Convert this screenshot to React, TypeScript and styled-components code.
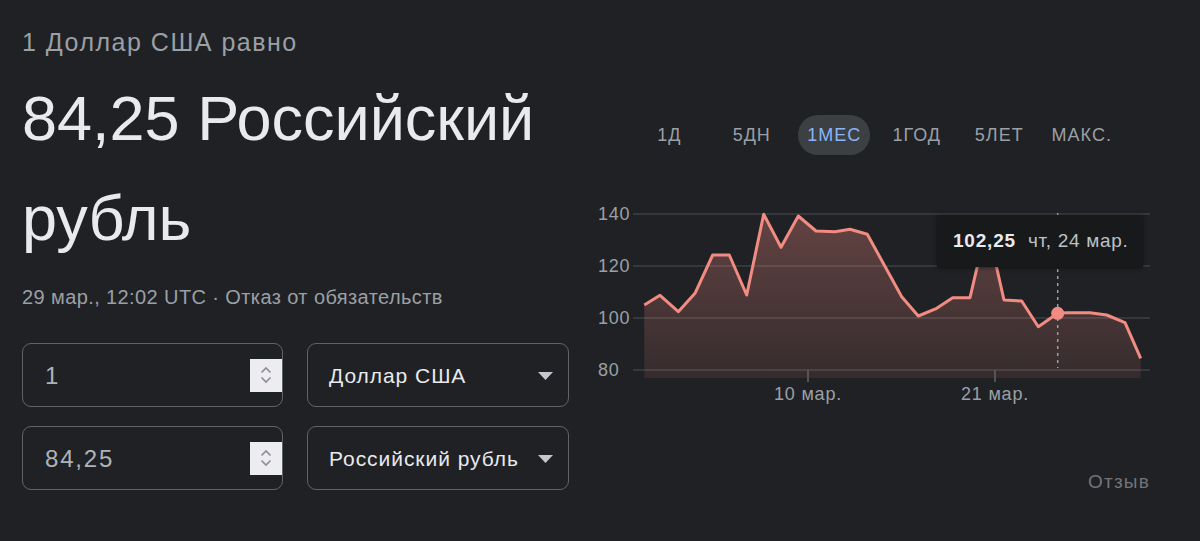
import styled, { createGlobalStyle } from "styled-components";

const GlobalStyle = createGlobalStyle`
  body {
    margin: 0;
    background: #202124;
    font-family: "Liberation Sans", Arial, sans-serif;
  }
`;

const tabs = ["1Д", "5ДН", "1МЕС", "1ГОД", "5ЛЕТ", "МАКС."];

const points: [number, number][] = [
  [54.3, 110], [70, 100.3], [88.3, 116.7], [105, 98.3], [122.7, 60], [139.3, 60],
  [156.7, 100], [173.7, 19.3], [191, 52.3], [208.3, 21], [226, 36], [245, 36.7],
  [260, 34.3], [277.3, 39.3], [311.7, 101.7], [328.3, 121], [346.7, 113.3],
  [362.7, 102.7], [380, 102.7], [397, 30], [414, 105], [431.7, 106], [448.3, 131.7],
  [467.7, 118.3], [476.7, 117.7], [500, 117.7], [516.7, 120], [535, 127.7], [550.7, 163.3],
];

const gridLines = [
  { label: "140", y: 19 },
  { label: "120", y: 71 },
  { label: "100", y: 123 },
  { label: "80", y: 175 },
];

const xTicks = [
  { label: "10 мар.", x: 218 },
  { label: "21 мар.", x: 405 },
];

const Stepper = () => (
  <StepBox>
    <svg width="14" height="26" viewBox="0 0 14 26">
      <path d="M2.5 10.5 L7 6 L11.5 10.5" fill="none" stroke="#8e8e99" strokeWidth="1.7" />
      <path d="M2.5 15.5 L7 20 L11.5 15.5" fill="none" stroke="#8e8e99" strokeWidth="1.7" />
    </svg>
  </StepBox>
);

const Caret = () => (
  <svg width="15" height="8" viewBox="0 0 15 8">
    <path d="M0 0 H15 L7.5 8 Z" fill="#c4c7cc" />
  </svg>
);

const App = () => {
  const line = points.map((p) => p.join(",")).join(" ");
  const area = `${line} 550.7,183 54.3,183`;

  return (
    <>
      <GlobalStyle />
      <Page>
        <LeftColumn>
          <Equals>1 Доллар США равно</Equals>
          <Result>84,25 Российский рубль</Result>
          <Meta>29 мар., 12:02 UTC · Отказ от обязательств</Meta>
          <Converter>
            <Field>
              <Amount>1</Amount>
              <Stepper />
            </Field>
            <Field $select>
              <CurrencyName>Доллар США</CurrencyName>
              <Caret />
            </Field>
            <Field>
              <Amount>84,25</Amount>
              <Stepper />
            </Field>
            <Field $select>
              <CurrencyName>Российский рубль</CurrencyName>
              <Caret />
            </Field>
          </Converter>
        </LeftColumn>

        <RightColumn>
          <Tabs>
            {tabs.map((t) => (
              <Tab key={t}>
                <TabLabel $active={t === "1МЕС"}>{t}</TabLabel>
              </Tab>
            ))}
          </Tabs>

          <ChartWrap>
            <svg width="560" height="220" viewBox="0 0 560 220">
              <defs>
                <linearGradient id="fill" x1="0" y1="0" x2="0" y2="1">
                  <stop offset="0%" stopColor="#f28b82" stopOpacity="0.32" />
                  <stop offset="100%" stopColor="#f28b82" stopOpacity="0.1" />
                </linearGradient>
              </defs>
              {gridLines.map((g) => (
                <g key={g.label}>
                  <line x1="43" x2="560" y1={g.y} y2={g.y} stroke="#3c4043" strokeWidth="1.5" />
                  <AxisText x="8" y={g.y} dominantBaseline="central">
                    {g.label}
                  </AxisText>
                </g>
              ))}
              <polygon points={area} fill="url(#fill)" />
              <polyline
                points={line}
                fill="none"
                stroke="#f28b82"
                strokeWidth="3"
                strokeLinejoin="round"
              />
              <line
                x1="467.7"
                x2="467.7"
                y1="18"
                y2="173"
                stroke="#9aa0a6"
                strokeWidth="1.5"
                strokeDasharray="3 4"
              />
              <circle cx="467.7" cy="118.3" r="6.5" fill="#f28b82" />
              {xTicks.map((t) => (
                <g key={t.label}>
                  <line x1={t.x} x2={t.x} y1="175" y2="187" stroke="#5f6368" strokeWidth="1.5" />
                  <AxisText x={t.x} y="199" textAnchor="middle" dominantBaseline="central">
                    {t.label}
                  </AxisText>
                </g>
              ))}
            </svg>
            <Tooltip>
              <TipValue>102,25</TipValue>
              <TipDate>чт, 24 мар.</TipDate>
            </Tooltip>
          </ChartWrap>

          <Feedback>Отзыв</Feedback>
        </RightColumn>
      </Page>
    </>
  );
};

const Page = styled.div`
  display: flex;
  align-items: flex-start;
  gap: 21px;
  padding-left: 22px;
  min-height: 541px;
  box-sizing: border-box;
  background: #202124;
`;

const LeftColumn = styled.div`
  width: 547px;
  padding-top: 27px;
`;

const Equals = styled.div`
  color: #9aa0a6;
  font-size: 25px;
  line-height: 30px;
  letter-spacing: 1.5px;
`;

const Result = styled.div`
  margin-top: 11px;
  color: #e8eaed;
  font-size: 63px;
  line-height: 100px;
`;

const Meta = styled.div`
  margin-top: 17px;
  color: #9aa0a6;
  font-size: 20px;
  line-height: 24px;
  letter-spacing: 0.4px;
`;

const Converter = styled.div`
  margin-top: 34px;
  display: grid;
  grid-template-columns: 261px 262px;
  column-gap: 24px;
  row-gap: 19px;
`;

const Field = styled.div<{ $select?: boolean }>`
  height: 64px;
  box-sizing: border-box;
  border: 1px solid #5f6368;
  border-radius: 9px;
  display: flex;
  align-items: center;
  justify-content: space-between;
  padding: ${(p) => (p.$select ? "2px 15px 0 21px" : "2px 0 0 22px")};
`;

const Amount = styled.span`
  color: #aeb3b8;
  font-size: 24px;
  letter-spacing: 1.8px;
`;

const CurrencyName = styled.span`
  color: #e8eaed;
  font-size: 21px;
  letter-spacing: 0.95px;
`;

const StepBox = styled.div`
  width: 32px;
  height: 33px;
  margin-top: -2px;
  background: #ececf1;
  display: flex;
  align-items: center;
  justify-content: center;
`;

const RightColumn = styled.div`
  width: 560px;
  padding-top: 115px;
`;

const Tabs = styled.div`
  display: flex;
  padding-left: 38px;
`;

const Tab = styled.div`
  width: 82.5px;
  display: flex;
  justify-content: center;
`;

const TabLabel = styled.div<{ $active?: boolean }>`
  height: 40px;
  line-height: 40px;
  padding: 0 9px;
  border-radius: 20px;
  font-size: 18px;
  letter-spacing: 1px;
  color: ${(p) => (p.$active ? "#8ab4f8" : "#9aa0a6")};
  background: ${(p) => (p.$active ? "#3c4043" : "transparent")};
`;

const AxisText = styled.text`
  fill: #9aa0a6;
  font-size: 18px;
  letter-spacing: 0.8px;
  font-family: "Liberation Sans", Arial, sans-serif;
`;

const ChartWrap = styled.div`
  position: relative;
  margin-top: 40px;

  svg {
    display: block;
  }
`;

const Tooltip = styled.div`
  position: absolute;
  left: 347px;
  top: 20px;
  width: 206px;
  height: 52px;
  box-sizing: border-box;
  padding-left: 16px;
  display: flex;
  align-items: center;
  gap: 12px;
  background: #18191b;
  box-shadow: 0 1px 4px rgba(0, 0, 0, 0.5);
  font-size: 19px;
`;

const TipValue = styled.span`
  color: #e8eaed;
  font-weight: 700;
  letter-spacing: 0.8px;
`;

const TipDate = styled.span`
  color: #bdc1c6;
  letter-spacing: 0.7px;
`;

const Feedback = styled.div`
  margin-top: 56px;
  text-align: right;
  color: #70757a;
  font-size: 19px;
  line-height: 22px;
  letter-spacing: 1.2px;
`;

export default App;
